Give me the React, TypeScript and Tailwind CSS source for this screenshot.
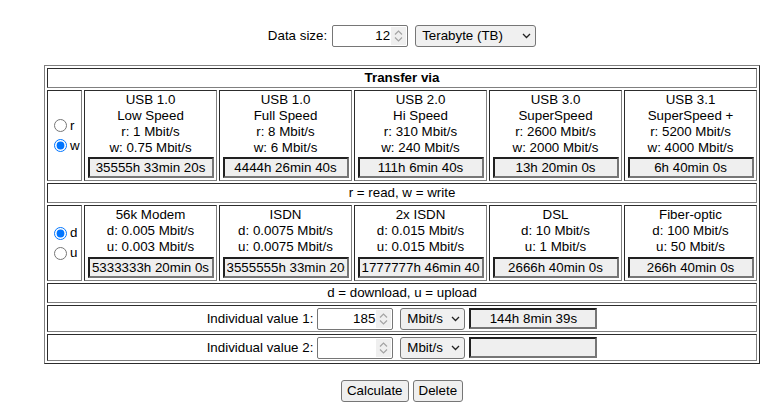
import React from 'react';

const cell = 'border border-[gray] [border-style:inset]! p-px';

const usb = [
  { name: 'USB 1.0', kind: 'Low Speed', a: 'r: 1 Mbit/s', b: 'w: 0.75 Mbit/s', time: '35555h 33min 20s' },
  { name: 'USB 1.0', kind: 'Full Speed', a: 'r: 8 Mbit/s', b: 'w: 6 Mbit/s', time: '4444h 26min 40s' },
  { name: 'USB 2.0', kind: 'Hi Speed', a: 'r: 310 Mbit/s', b: 'w: 240 Mbit/s', time: '111h 6min 40s' },
  { name: 'USB 3.0', kind: 'SuperSpeed', a: 'r: 2600 Mbit/s', b: 'w: 2000 Mbit/s', time: '13h 20min 0s' },
  { name: 'USB 3.1', kind: 'SuperSpeed +', a: 'r: 5200 Mbit/s', b: 'w: 4000 Mbit/s', time: '6h 40min 0s' },
];

const lines = [
  { name: '56k Modem', a: 'd: 0.005 Mbit/s', b: 'u: 0.003 Mbit/s', time: '5333333h 20min 0s' },
  { name: 'ISDN', a: 'd: 0.0075 Mbit/s', b: 'u: 0.0075 Mbit/s', time: '3555555h 33min 20s' },
  { name: '2x ISDN', a: 'd: 0.015 Mbit/s', b: 'u: 0.015 Mbit/s', time: '1777777h 46min 40s' },
  { name: 'DSL', a: 'd: 10 Mbit/s', b: 'u: 1 Mbit/s', time: '2666h 40min 0s' },
  { name: 'Fiber-optic', a: 'd: 100 Mbit/s', b: 'u: 50 Mbit/s', time: '266h 40min 0s' },
];

const Result: React.FC<{ value: string; className?: string }> = ({ value, className = '' }) => (
  <input
    readOnly
    value={value}
    className={`h-[21px] border-2 border-[#767676] [border-style:inset]! bg-[#efefef] text-center px-[2px] py-px outline-none ${className}`}
  />
);

const NumberBox: React.FC<{ value: string }> = ({ value }) => (
  <div className="flex items-center w-[76px] h-[22px] border border-[#767676] rounded-[2px] bg-white">
    <span className="flex-1 text-right">{value}</span>
    <span className="flex items-center justify-center w-[15px] h-[18px] mx-px bg-[#efefef]">
      <svg width="9" height="14" viewBox="0 0 9 14">
        <path d="M1 5.5 L4.5 2 L8 5.5" stroke="#a3a3a3" strokeWidth="1.2" fill="none" />
        <path d="M1 8.5 L4.5 12 L8 8.5" stroke="#a3a3a3" strokeWidth="1.2" fill="none" />
      </svg>
    </span>
  </div>
);

const SelectBox: React.FC<{ label: string; className?: string }> = ({ label, className = '' }) => (
  <div
    className={`flex items-center justify-between h-[22px] border border-[#767676] rounded-[3px] bg-[#f0f0f0] pl-[6px] pr-[4px] ${className}`}
  >
    <span>{label}</span>
    <svg width="9" height="6" viewBox="0 0 9 6">
      <path d="M1 1 L4.5 4.5 L8 1" stroke="#222" strokeWidth="1.3" fill="none" />
    </svg>
  </div>
);

const RadioPair: React.FC<{ a: string; b: string; checked: 'a' | 'b' }> = ({ a, b, checked }) => (
  <div className="flex flex-col">
    {[a, b].map((l, i) => (
      <label key={l} className="flex items-center h-[20px]">
        <input
          type="radio"
          name={a + b}
          defaultChecked={(i === 0 ? 'a' : 'b') === checked}
          className="m-0 ml-[5px] mr-[3px] w-[13px] h-[13px]"
        />
        {l}
      </label>
    ))}
  </div>
);

export default function App() {
  return (
    <div className="font-['Liberation_Sans',Arial,sans-serif] text-[13.33px] leading-[16px] text-black bg-white w-[775px] h-[408px] pt-[25px] pl-[44px]">
      <div className="w-[716px]">
        <div className="flex justify-center items-center">
          <span>Data size:</span>
          <div className="ml-[5px]">
            <NumberBox value="12" />
          </div>
          <SelectBox label="Terabyte (TB)" className="ml-[7px] w-[121px]" />
        </div>

        <table className="mt-[18px] w-[716px] border-separate border-spacing-[2px] border border-[gray] [border-style:outset]!">
          <tbody>
            <tr>
              <td colSpan={6} className={`${cell} text-center font-bold`}>
                Transfer via
              </td>
            </tr>
            <tr>
              <td className={`${cell} w-[35px]`}>
                <RadioPair a="r" b="w" checked="b" />
              </td>
              {usb.map((d, i) => (
                <td key={i} className={`${cell} w-[133px] text-center`}>
                  <div>{d.name}</div>
                  <div>{d.kind}</div>
                  <div>{d.a}</div>
                  <div>{d.b}</div>
                  <div className="flex justify-center items-center h-[23px]">
                    <Result value={d.time} className="w-[126px]" />
                  </div>
                </td>
              ))}
            </tr>
            <tr>
              <td colSpan={6} className={`${cell} text-center`}>
                r = read, w = write
              </td>
            </tr>
            <tr>
              <td className={cell}>
                <RadioPair a="d" b="u" checked="a" />
              </td>
              {lines.map((d, i) => (
                <td key={i} className={`${cell} text-center`}>
                  <div>{d.name}</div>
                  <div>{d.a}</div>
                  <div>{d.b}</div>
                  <div className="flex justify-center items-center h-[24px]">
                    <Result value={d.time} className="w-[126px]" />
                  </div>
                </td>
              ))}
            </tr>
            <tr>
              <td colSpan={6} className={`${cell} text-center`}>
                d = download, u = upload
              </td>
            </tr>
            {[
              { label: 'Individual value 1:', value: '185', time: '144h 8min 39s' },
              { label: 'Individual value 2:', value: '', time: '' },
            ].map((r) => (
              <tr key={r.label}>
                <td colSpan={6} className={cell}>
                  <div className="flex justify-center items-center h-[23px]">
                    <span>{r.label}</span>
                    <div className="ml-[4px]">
                      <NumberBox value={r.value} />
                    </div>
                    <SelectBox label="Mbit/s" className="ml-[7px] w-[65px]" />
                    <Result value={r.time} className="ml-[4px] w-[128px]" />
                  </div>
                </td>
              </tr>
            ))}
          </tbody>
        </table>

        <div className="flex justify-center gap-[4px] mt-[16px]">
          <button className="h-[22px] px-[5px] border border-[#767676] rounded-[3px] bg-[#efefef]">Calculate</button>
          <button className="h-[22px] px-[5px] border border-[#767676] rounded-[3px] bg-[#efefef]">Delete</button>
        </div>
      </div>
    </div>
  );
}
